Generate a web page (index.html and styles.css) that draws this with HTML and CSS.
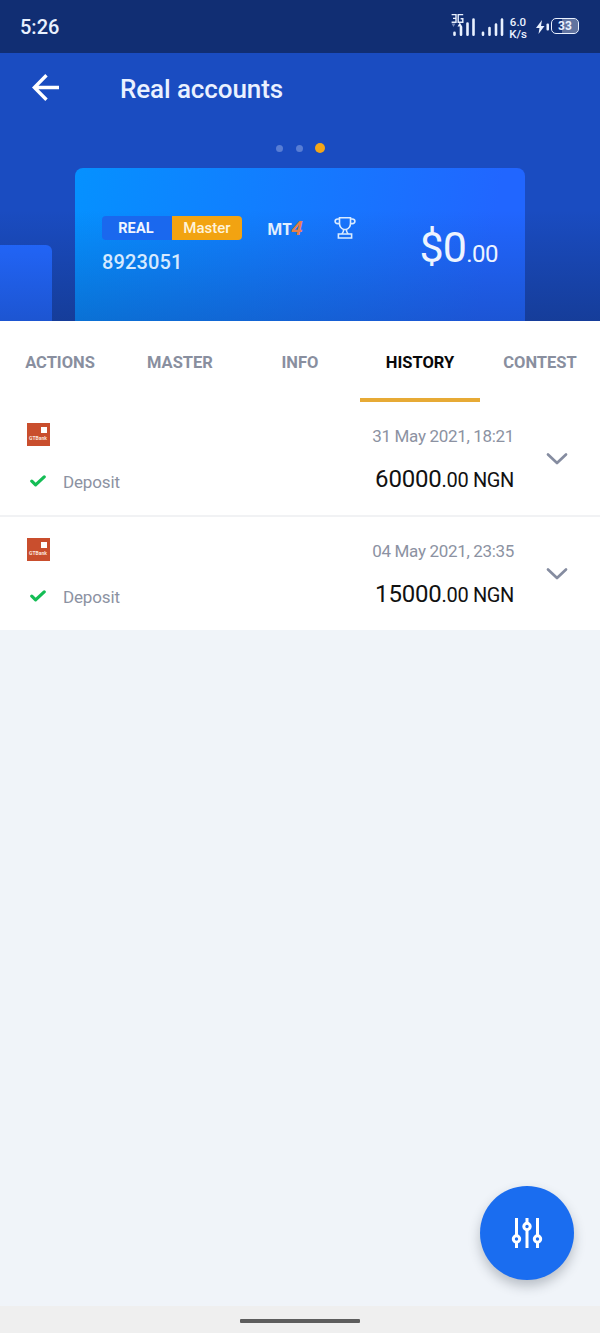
FILE: index.html
```html
<!DOCTYPE html>
<html lang="en">
<head>
<meta charset="utf-8">
<title>Real accounts</title>
<link rel="stylesheet" href="styles.css">
</head>
<body>
<div class="screen">
  <div class="status">
    <span class="clock">5:26</span>
    <div class="signals">
      <svg class="cell" width="54" height="26" viewBox="0 0 54 26" fill="none" stroke="#e9f1ff">
        <path stroke-width="1.400" d="M.6 1.600h4.400v7.600H.6M2 5.400h3M12.200 1.600H7.200v7.600h4.600V5.800H9.600"/>
        <path fill="#e9f1ff" stroke="none" d="M6.500 13.500l2.300-4 2.300 4z"/>
        <path fill="#7689b8" stroke="none" d="M.5 10.500h4l-2 3.500z"/>
        <path stroke-width="2.600" stroke-linecap="round" d="M3.500 19.800v1.900M10 14v7.700M16.500 10.500v11.200M22.500 6.500v15.200M32 19.800v1.900M38.500 15v6.700M45 11.500v10.200M51 6.500v15.200"/>
      </svg>
      <div class="speed"><span>6.0</span><span>K/s</span></div>
      <svg class="bolt" width="14" height="16" viewBox="0 0 14 16" fill="#e9f1ff"><path d="M6 1 0 9h3.500L2.500 15l6-8H5z"/><rect x="10.500" y="4.500" width="2.500" height="7" rx="1"/></svg>
      <div class="battery"><span>33</span></div>
    </div>
  </div>

  <header class="hero">
    <div class="titlebar">
      <svg width="28" height="28" viewBox="0 0 28 28" fill="none" stroke="#fff" stroke-width="3.400"><path d="M27 13.500H3M14.500 1.300 2.300 13.500l12.200 12.200"/></svg>
      <h1>Real accounts</h1>
    </div>
    <div class="dots"><i></i><i></i><i class="on"></i></div>
    <div class="cards">
      <div class="card-prev"></div>
      <div class="card">
        <div class="account">
          <div class="meta">
            <div class="badge"><span class="real">REAL</span><span class="master">Master</span></div>
            <div class="mt">MT<b>4</b></div>
            <svg class="cup" width="22" height="24" viewBox="0 0 22 24" fill="none" stroke="#d9ebff" stroke-width="1.600"><path d="M5.500 1.700h11v5.500c0 3-1.800 5.300-4.200 6.300H9.700c-2.400-1-4.200-3.300-4.200-6.300zM5.500 3H3.800C.2 3 .2 7.600 3.800 7.600h1.700M16.500 3h1.700c3.600 0 3.600 4.600 0 4.600h-1.700M9.700 13.500c0 2.500-.8 3.300-2 4.500h6.600c-1.200-1.200-2-2-2-4.500M4.400 18h13.200v4H4.400z"/></svg>
          </div>
          <div class="number">8923051</div>
        </div>
        <div class="balance">$0<small>.00</small></div>
      </div>
    </div>
  </header>

  <nav class="tabs">
    <span>ACTIONS</span><span>MASTER</span><span>INFO</span><span class="active">HISTORY</span><span>CONTEST</span>
  </nav>

  <main class="list">
    <section class="row">
      <div class="kind">
        <div class="bank"><i></i><span>GTBank</span></div>
        <div class="state"><svg width="16" height="12" viewBox="0 0 16 12" fill="none" stroke="#14bd55" stroke-width="3.200" stroke-linecap="round" stroke-linejoin="round"><path d="M1.800 6.200 5.600 9.900 14.200 1.900"/></svg><span>Deposit</span></div>
      </div>
      <div class="sum"><time>31 May 2021, 18:21</time><div class="amount">60000<small>.00 NGN</small></div></div>
      <svg class="chev" width="22" height="14" viewBox="0 0 22 14" fill="none" stroke="#858ca0" stroke-width="2.700" stroke-linecap="round" stroke-linejoin="round"><path d="M2 2.500 11 11 20 2.500"/></svg>
    </section>
    <section class="row">
      <div class="kind">
        <div class="bank"><i></i><span>GTBank</span></div>
        <div class="state"><svg width="16" height="12" viewBox="0 0 16 12" fill="none" stroke="#14bd55" stroke-width="3.200" stroke-linecap="round" stroke-linejoin="round"><path d="M1.800 6.200 5.600 9.900 14.200 1.900"/></svg><span>Deposit</span></div>
      </div>
      <div class="sum"><time>04 May 2021, 23:35</time><div class="amount">15000<small>.00 NGN</small></div></div>
      <svg class="chev" width="22" height="14" viewBox="0 0 22 14" fill="none" stroke="#858ca0" stroke-width="2.700" stroke-linecap="round" stroke-linejoin="round"><path d="M2 2.500 11 11 20 2.500"/></svg>
    </section>
  </main>

  <div class="fab">
    <svg width="32" height="32" viewBox="0 0 32 32" fill="none" stroke="#fff" stroke-width="3"><path d="M5.500 1v17M5.500 25v6M16 1v4.500M16 13v18M26.500 1v17M26.500 25v6"/><circle cx="5.500" cy="22" r="3.200"/><circle cx="16" cy="9.500" r="3.200"/><circle cx="26.500" cy="22" r="3.200"/></svg>
  </div>
  <footer class="gesture"><i></i></footer>
</div>
</body>
</html>
```
FILE: styles.css
```css
* { box-sizing: border-box; }
body { margin: 0; font-family: Roboto, "Liberation Sans", sans-serif; }
svg { display: block; flex: none; }
.screen { position: relative; width: 600px; height: 1333px; display: flex; flex-direction: column; background: #f0f4f9; overflow: hidden; }

.status { height: 53px; flex: none; display: flex; justify-content: space-between; padding: 0 21px 0 20px; background: #112e73; color: #e9f1ff; }
.clock { padding-top: 15px; font-size: 20px; line-height: 24px; font-weight: 500; }
.signals { display: flex; }
.cell { margin-top: 13px; }
.speed { display: flex; flex-direction: column; align-items: center; width: 20px; margin: 16px 0 0 3px; font-size: 11.500px; line-height: 12px; font-weight: 500; }
.bolt { margin: 19px 0 0 8px; }
.battery { width: 28px; height: 16px; margin: 18px 0 0 1px; border: 1.500px solid #e9f1ff; border-radius: 5px; background: linear-gradient(90deg, #112e73 40%, #61739f 40%) padding-box; text-align: center; font-size: 12px; line-height: 14px; font-weight: 700; }

.hero { height: 268px; flex: none; display: flex; flex-direction: column; background: linear-gradient(rgba(17,46,115,0) 157px, rgba(17,46,115,.5)), #1a4cc1; }
.titlebar { display: flex; height: 90px; padding: 21px 0 0 32px; gap: 60px; }
h1 { margin: 0; font-size: 26px; line-height: 31px; font-weight: 500; color: #eaf1ff; letter-spacing: -.1px; }
.dots { display: flex; align-items: center; gap: 13px; height: 10px; padding-left: 276px; }
.dots i { width: 7px; height: 7px; border-radius: 50%; background: #587dd4; }
.dots .on { width: 10px; height: 10px; margin-left: -1px; background: #f3a618; }
.cards { display: flex; gap: 23px; flex: 1; align-items: flex-end; padding-top: 15px; }
.card-prev { width: 52px; height: 76px; border-radius: 0 6px 0 0; background: linear-gradient(rgba(17,46,115,.03), rgba(17,46,115,.3)), #2266fa; }
.card { width: 450px; height: 153px; display: flex; justify-content: space-between; padding: 48px 27px 0; border-radius: 8px 8px 0 0; background: linear-gradient(rgba(17,46,115,0) 42px, rgba(17,46,115,.3)), linear-gradient(100deg, #0591ff, #2166ff 90%); color: #e1efff; }
.meta { display: flex; height: 24px; }
.badge { display: flex; width: 140px; border-radius: 4px; overflow: hidden; font-size: 15px; line-height: 25px; font-weight: 500; text-align: center; }
.real { width: 70px; background: #1a68ee; font-weight: 700; font-size: 14.500px; padding-right: 2px; letter-spacing: .15px; color: #f0f6ff; }
.master { width: 70px; background: #f2a311; color: #fff3da; }
.mt { display: flex; align-items: baseline; width: 41px; margin-left: 25px; font: 700 16.500px/24px "Open Sans", sans-serif; letter-spacing: -.3px; }
.mt b { color: #e67f4c; font: italic 700 20px/24px "Open Sans", sans-serif; }
.cup { margin-left: 26px; }
.number { margin-top: 9px; font-size: 20px; line-height: 26px; letter-spacing: .15px; font-weight: 500; color: #d6eaff; }
.balance { padding-top: 6px; font-size: 43px; line-height: 50px; white-space: nowrap; color: #edf4ff; letter-spacing: -.8px; }
.balance small { font-size: 24px; letter-spacing: -.5px; }

.tabs { height: 81px; flex: none; display: grid; grid-template: 81px / repeat(5, 120px); background: #fff; color: #898f9f; text-align: center; font-size: 16.500px; font-weight: 700; line-height: 83px; }
.active { color: #080809; border-bottom: 4px solid #e7aa35; }

.row { display: flex; height: 114px; background: #fff; padding: 0 32px 0 27px; }
.row:first-child { height: 115px; border-bottom: 2px solid #f1f2f4; }
.row + .row { height: 113px; }
.kind { width: 268px; padding-top: 21px; }
.bank { display: flex; flex-direction: column; width: 23px; height: 23px; background: #c94e2d; padding: 4px 3px 0 2px; }
.bank i { width: 6px; height: 6px; background: #fff; align-self: flex-end; }
.bank span { width: 18px; text-align: center; font-size: 5px; line-height: 10px; font-weight: 700; color: #fae4da; }
.state { display: flex; align-items: center; gap: 17px; margin-top: 24px; padding-left: 3px; color: #8c92a2; font-size: 17px; line-height: 24px; letter-spacing: -.15px; }
.state svg { position: relative; top: -1px; }
.sum { width: 220px; padding-top: 22px; text-align: right; }
time { display: block; color: #8c92a2; font-size: 17px; line-height: 24px; letter-spacing: -.33px; }
.amount { margin-top: 17px; color: #111; font-size: 24px; line-height: 28px; letter-spacing: -.2px; }
.amount small { font-size: 20px; letter-spacing: -.35px; }
.chev { margin: 50px 0 0 32px; }

.fab { position: absolute; left: 480px; top: 1186px; width: 94px; height: 94px; border-radius: 50%; display: grid; place-items: center; background: #1a6df0; box-shadow: 0 6px 12px rgba(40,50,65,.28); }
.gesture { height: 27px; margin-top: auto; flex: none; display: flex; justify-content: center; align-items: center; padding-top: 3px; background: #efefef; }
.gesture i { width: 120px; height: 4px; border-radius: 1px; background: #5d5d5d; }
```
